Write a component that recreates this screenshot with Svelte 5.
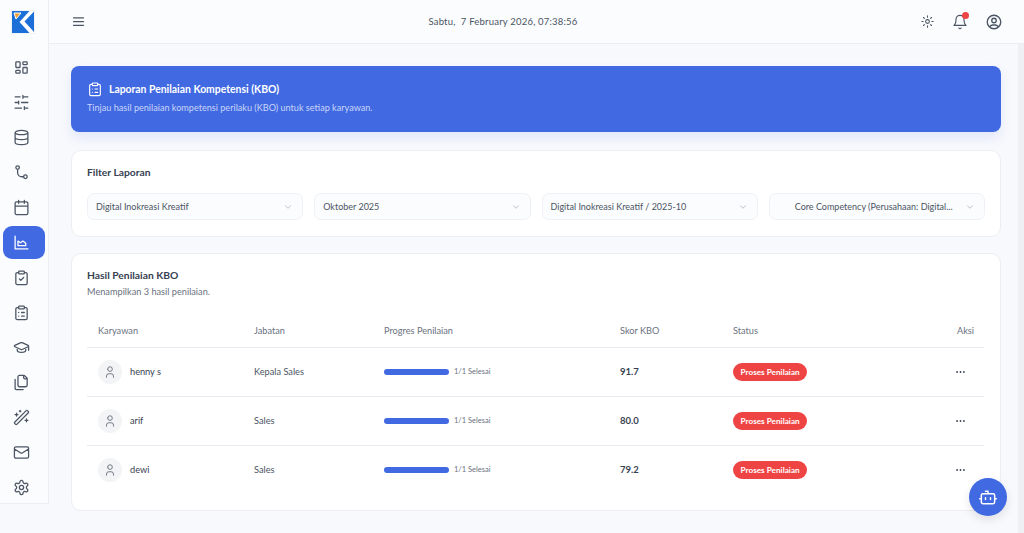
<script>
  const s = { fill: 'none', stroke: 'currentColor', 'stroke-width': 2, 'stroke-linecap': 'round', 'stroke-linejoin': 'round' };
  const clip = 'M9 3h6a1 1 0 0 1 1 1v2a1 1 0 0 1-1 1H9a1 1 0 0 1-1-1V4a1 1 0 0 1 1-1z M16 5h2a2 2 0 0 1 2 2v13a2 2 0 0 1-2 2H6a2 2 0 0 1-2-2V7a2 2 0 0 1 2-2h2';
  const nav = [
    'M5 4h4a1 1 0 0 1 1 1v6a1 1 0 0 1-1 1H5a1 1 0 0 1-1-1V5a1 1 0 0 1 1-1 M5 16h4a1 1 0 0 1 1 1v2a1 1 0 0 1-1 1H5a1 1 0 0 1-1-1v-2a1 1 0 0 1 1-1 M15 12h4a1 1 0 0 1 1 1v6a1 1 0 0 1-1 1h-4a1 1 0 0 1-1-1v-6a1 1 0 0 1 1-1 M15 4h4a1 1 0 0 1 1 1v2a1 1 0 0 1-1 1h-4a1 1 0 0 1-1-1V5a1 1 0 0 1 1-1',
    'M21 4h-7 M10 4H3 M21 12h-9 M8 12H3 M21 20h-5 M12 20H3 M14 2v4 M8 10v4 M16 18v4',
    'M3 5a9 3 0 1 0 18 0a9 3 0 1 0-18 0 M3 5v14a9 3 0 0 0 18 0V5 M3 12a9 3 0 0 0 18 0',
    'M4 5a2.5 2.5 0 1 0 5 0a2.5 2.5 0 1 0-5 0 M15 18a2.5 2.5 0 1 0 5 0a2.5 2.5 0 1 0-5 0 M6.5 7.5V12a6 6 0 0 0 6 6H15',
    'M8 2v4 M16 2v4 M5 4h14a2 2 0 0 1 2 2v14a2 2 0 0 1-2 2H5a2 2 0 0 1-2-2V6a2 2 0 0 1 2-2z M3 10h18',
    'M3 3v18h18 M7 16.5V10l3.5 2.5L14 10l4 3v3.5z',
    clip + ' M9 14l2 2 4-4',
    clip + ' M12 12h4 M12 17h4 M8 12h.01 M8 17h.01',
    'M21.42 10.922a1 1 0 0 0-.019-1.838L12.83 5.18a2 2 0 0 0-1.66 0L2.6 9.08a1 1 0 0 0 0 1.832l8.57 3.908a2 2 0 0 0 1.66 0z M22 10v6 M6 12.5V16a6 3 0 0 0 12 0v-3.5',
    'M20 7h-3a2 2 0 0 1-2-2V2 M9 18a2 2 0 0 1-2-2V4a2 2 0 0 1 2-2h7l4 4v10a2 2 0 0 1-2 2Z M3 7.6v12.8A1.6 1.6 0 0 0 4.6 22h9.8',
    'm21.64 3.64-1.28-1.28a1.21 1.21 0 0 0-1.72 0L2.36 18.64a1.21 1.21 0 0 0 0 1.72l1.28 1.28a1.2 1.2 0 0 0 1.72 0L21.64 5.36a1.2 1.2 0 0 0 0-1.72 m14 7 3 3 M5 6v4 M19 14v4 M10 2v2 M7 8H3 M21 16h-4 M11 3H9',
    'M4 4h16a2 2 0 0 1 2 2v12a2 2 0 0 1-2 2H4a2 2 0 0 1-2-2V6a2 2 0 0 1 2-2z M22 7l-8.97 5.7a1.94 1.94 0 0 1-2.06 0L2 7',
    'M12.22 2h-.44a2 2 0 0 0-2 2v.18a2 2 0 0 1-1 1.73l-.43.25a2 2 0 0 1-2 0l-.15-.08a2 2 0 0 0-2.73.73l-.22.38a2 2 0 0 0 .73 2.73l.15.1a2 2 0 0 1 1 1.72v.51a2 2 0 0 1-1 1.74l-.15.09a2 2 0 0 0-.73 2.73l.22.38a2 2 0 0 0 2.73.73l.15-.08a2 2 0 0 1 2 0l.43.25a2 2 0 0 1 1 1.73V20a2 2 0 0 0 2 2h.44a2 2 0 0 0 2-2v-.18a2 2 0 0 1 1-1.73l.43-.25a2 2 0 0 1 2 0l.15.08a2 2 0 0 0 2.73-.73l.22-.39a2 2 0 0 0-.73-2.73l-.15-.08a2 2 0 0 1-1-1.74v-.5a2 2 0 0 1 1-1.74l.15-.09a2 2 0 0 0 .73-2.73l-.22-.38a2 2 0 0 0-2.73-.73l-.15.08a2 2 0 0 1-2 0l-.43-.25a2 2 0 0 1-1-1.73V4a2 2 0 0 0-2-2z M9 12a3 3 0 1 0 6 0a3 3 0 1 0-6 0'
  ];
  const active = 5;
  const filters = ['Digital Inokreasi Kreatif', 'Oktober 2025', 'Digital Inokreasi Kreatif / 2025-10', 'Core Competency (Perusahaan: Digital...'];
  const rows = [
    { name: 'henny s', job: 'Kepala Sales', score: '91.7' },
    { name: 'arif', job: 'Sales', score: '80.0' },
    { name: 'dewi', job: 'Sales', score: '79.2' }
  ];
</script>

<div class="shell">
  <aside class="sidebar">
    <div class="logo">
      <svg viewBox="0 0 24 24" width="24" height="24">
        <rect width="24" height="24" fill="#eef1f6"/>
        <rect x="1" y="1" width="22" height="22" fill="#1c6fd6"/>
        <path d="M18.5 1H23v.5L13.5 11.5 23 22v1h-4.5L8.5 12z" fill="#fff"/>
        <path d="M3 3h7L5 9z" fill="#f0a02c" stroke="#fff" stroke-width="1"/>
      </svg>
    </div>
    <nav class="nav">
      {#each nav as d, i}
        <div class="nav-item" class:active={i === active}>
          <svg viewBox="0 0 24 24" width="17" height="17" {...s} stroke-width="1.8"><path {d}/></svg>
        </div>
      {/each}
    </nav>
  </aside>

  <div class="main">
    <header class="topbar">
      <svg class="menu" viewBox="0 0 24 24" width="15" height="15" {...s}><path d="M4 6h16 M4 12h16 M4 18h16"/></svg>
      <div class="clock">Sabtu, &nbsp;7 February 2026, 07:38:56</div>
      <div class="actions">
        <svg viewBox="0 0 24 24" width="15" height="15" {...s} stroke-width="1.7"><path d="M9 12a3 3 0 1 0 6 0a3 3 0 1 0-6 0 M12 3v2 M12 19v2 M3 12h2 M19 12h2 M5.6 5.6l1.4 1.4 M17 17l1.4 1.4 M5.6 18.4L7 17 M17 7l1.4-1.4"/></svg>
        <div class="bell">
          <svg viewBox="0 0 24 24" width="16" height="16" {...s} stroke-width="1.7"><path d="M10.3 21a1.94 1.94 0 0 0 3.4 0 M6 8a6 6 0 0 1 12 0c0 7 3 9 3 9H3s3-2 3-9"/></svg>
          <span class="dot"></span>
        </div>
        <svg viewBox="0 0 24 24" width="18" height="18" {...s} stroke-width="1.8"><path d="M3 12a9 9 0 1 0 18 0a9 9 0 1 0-18 0 M9 10a3 3 0 1 0 6 0a3 3 0 1 0-6 0 M6.2 18.8A4 4 0 0 1 10 16h4a4 4 0 0 1 3.8 2.8"/></svg>
      </div>
    </header>

    <main class="content">
      <section class="banner">
        <div class="banner-title">
          <svg viewBox="0 0 24 24" width="16" height="16" {...s} stroke-width="1.7"><path d={nav[7]}/></svg>
          <h1>Laporan Penilaian Kompetensi (KBO)</h1>
        </div>
        <p>Tinjau hasil penilaian kompetensi perilaku (KBO) untuk setiap karyawan.</p>
      </section>

      <section class="card filter">
        <h2>Filter Laporan</h2>
        <div class="selects">
          {#each filters as f, i}
            <div class="select" class:indent={i === 3}>
              <span>{f}</span>
              <svg viewBox="0 0 24 24" width="10" height="10" {...s} stroke-width="1.6"><path d="M6 9l6 6 6-6"/></svg>
            </div>
          {/each}
        </div>
      </section>

      <section class="card results">
        <h2>Hasil Penilaian KBO</h2>
        <p class="sub">Menampilkan 3 hasil penilaian.</p>
        <table>
          <thead>
            <tr>
              <th class="c1">Karyawan</th><th class="c2">Jabatan</th><th class="c3">Progres Penilaian</th>
              <th class="c4">Skor KBO</th><th class="c5">Status</th><th class="c6">Aksi</th>
            </tr>
          </thead>
          <tbody>
            {#each rows as r}
              <tr>
                <td>
                  <div class="person">
                    <span class="avatar">
                      <svg viewBox="0 0 24 24" width="14" height="14" {...s} stroke-width="1.6"><path d="M8 7a4 4 0 1 0 8 0a4 4 0 1 0-8 0 M6 21v-2a4 4 0 0 1 4-4h4a4 4 0 0 1 4 4v2"/></svg>
                    </span>
                    <span class="name">{r.name}</span>
                  </div>
                </td>
                <td class="job">{r.job}</td>
                <td>
                  <div class="progress"><span class="bar"></span><span class="done">1/1 Selesai</span></div>
                </td>
                <td class="score">{r.score}</td>
                <td><span class="badge">Proses Penilaian</span></td>
                <td class="more">
                  <svg viewBox="0 0 10 2" width="9" height="2"><circle cx="1.2" cy="1" r="1"/><circle cx="5" cy="1" r="1"/><circle cx="8.8" cy="1" r="1"/></svg>
                </td>
              </tr>
            {/each}
          </tbody>
        </table>
      </section>
    </main>
  </div>

  <div class="scrollbar"></div>

  <button class="fab" aria-label="Asisten">
    <svg viewBox="0 0 24 24" width="20" height="20" {...s} stroke-width="1.8"><path d="M12 8V5H9 M6 8h12a2 2 0 0 1 2 2v8a2 2 0 0 1-2 2H6a2 2 0 0 1-2-2v-8a2 2 0 0 1 2-2z M2 14h2 M20 14h2 M15 13v2 M9 13v2"/></svg>
  </button>
</div>

<style>
  :global(body) { margin: 0; background: #f8f9fd; font-family: "Lato", "Open Sans", sans-serif; color: #374151; }
  .shell { display: flex; height: 533px; overflow: hidden; position: relative; }
  .sidebar { width: 48px; flex: none; height: 503px; border-right: 1px solid #eceef3; border-bottom: 1px solid #eceef3; background: #fbfcfe; display: flex; flex-direction: column; align-items: center; }
  .logo { height: 24px; margin: 10px 3px 0 0; }
  .logo svg { display: block; }
  .nav { display: flex; flex-direction: column; gap: 2px; margin-top: 16.5px; width: 100%; align-items: center; }
  .nav-item { width: 42px; height: 33px; box-sizing: border-box; padding-right: 5px; border-radius: 9px; display: flex; align-items: center; justify-content: center; color: #4b5563; }
  .nav-item.active { background: #4169e1; color: #fff; }
  .main { flex: 1; min-width: 0; display: flex; flex-direction: column; }
  .topbar { height: 43px; flex: none; background: #fbfcfe; border-bottom: 1px solid #eceef3; display: flex; justify-content: space-between; align-items: center; padding: 0 21px 0 22px; margin-right: -6px; color: #4b5563; }
  .clock { font-size: 9.5px; color: #4b5563; letter-spacing: 0.2px; }
  .actions { display: flex; align-items: center; gap: 17px; }
  .bell { position: relative; display: flex; }
  .dot { position: absolute; top: -2px; right: -1px; width: 7px; height: 7px; border-radius: 50%; background: #ef4444; }
  .content { padding: 22px 17px 0 22px; display: flex; flex-direction: column; gap: 17px; }
  .banner { height: 66px; box-sizing: border-box; background: #4169e1; color: #fff; border-radius: 8px; padding: 15px 16px; margin-bottom: 1px; box-shadow: 0 6px 12px rgba(65, 105, 225, 0.12); }
  .banner-title { display: flex; align-items: center; gap: 6px; }
  h1 { margin: 0; font-size: 10.4px; font-weight: 700; color: #fff; }
  .banner p { margin: 5px 0 0; font-size: 9.1px; color: #c9d6fa; }
  .card { background: #fff; border: 1px solid #eceef3; border-radius: 10px; box-sizing: border-box; padding: 0 16px 0 15px; }
  h2 { margin: 0; font-size: 10.3px; font-weight: 700; color: #374151; }
  .filter { height: 87px; padding-top: 15px; margin-bottom: -1px; }
  .selects { display: grid; grid-template-columns: repeat(4, 1fr); gap: 11px; margin-top: 15px; margin-right: -1px; }
  .select { min-width: 0; height: 27px; box-sizing: border-box; border: 1px solid #eff1f6; border-radius: 7px; background: #fbfcfe; padding: 0 8px; display: flex; align-items: center; justify-content: space-between; font-size: 9px; color: #4b5563; white-space: nowrap; }
  .select svg { color: #9ca3af; margin-right: 1px; flex: none; }
  .select.indent { padding-left: 25px; }
  .results { height: 258px; padding-top: 15px; }
  .sub { margin: 5px 0 0; font-size: 9.2px; color: #6b7280; line-height: 11px; }
  table { width: 100%; border-collapse: collapse; table-layout: fixed; margin-top: 17px; font-size: 9.2px; }
  th { font-weight: 400; text-align: left; color: #6b7280; height: 33px; padding: 0 0 0 11px; border-bottom: 1px solid #e9ebf0; font-size: 9.2px; box-sizing: border-box; }
  td { height: 49px; padding: 0 0 0 11px; border-bottom: 1px solid #e9ebf0; box-sizing: border-box; color: #4b5563; }
  tbody tr:last-child td { border-bottom: 0; }
  .c1 { width: 156px; } .c2 { width: 130px; } .c3 { width: 236px; } .c4 { width: 113px; } .c6 { text-align: right; padding-right: 10px; width: 100px; }
  .person { display: flex; align-items: center; gap: 8px; }
  .avatar { width: 24px; height: 24px; border-radius: 50%; background: #f3f4f6; color: #6b7280; display: flex; align-items: center; justify-content: center; }
  .name { color: #374151; }
  .progress { display: flex; align-items: center; gap: 5px; }
  .bar { width: 65px; height: 6px; border-radius: 3px; background: #4169e1; }
  .done { font-size: 7.5px; color: #6b7280; }
  .score { font-weight: 700; color: #374151; font-size: 9.5px; }
  .badge { display: inline-block; background: #ef4444; color: #fff; font-size: 8.2px; font-weight: 700; line-height: 18px; height: 18px; padding: 0 7.5px; border-radius: 9px; white-space: nowrap; }
  .more { text-align: right; padding-right: 19px; }
  .more svg { fill: #374151; display: block; margin-left: auto; }
  .scrollbar { width: 6px; flex: none; margin-top: 44px; background: #eef0f4; }
  .fab { position: absolute; left: 969px; top: 478px; width: 38px; height: 38px; border: 0; padding: 0; border-radius: 50%; background: #4169e1; color: #fff; display: flex; align-items: center; justify-content: center; box-shadow: 0 4px 10px rgba(0, 0, 0, 0.1); }
</style>
